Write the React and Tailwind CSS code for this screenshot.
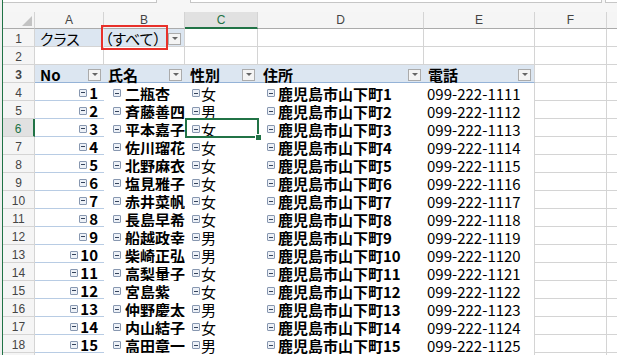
import React from "react";

const people = [
  ["二瓶杏", "女"],
  ["斉藤善四", "男"],
  ["平本嘉子", "女"],
  ["佐川瑠花", "女"],
  ["北野麻衣", "女"],
  ["塩見雅子", "女"],
  ["赤井菜帆", "女"],
  ["長島早希", "女"],
  ["船越政幸", "男"],
  ["柴崎正弘", "男"],
  ["高梨量子", "女"],
  ["宮島紫", "女"],
  ["仲野慶太", "男"],
  ["内山結子", "女"],
  ["高田章一", "男"],
];

const Minus = () => (
  <span className="inline-flex shrink-0 items-center justify-center w-[8px] h-[8px] border border-[#8797b0] rounded-[1px] bg-[#edf1f7]">
    <span className="w-[4px] h-px bg-[#34435c]" />
  </span>
);

const Drop = () => (
  <span className="ml-auto mr-[3px] flex shrink-0 items-center justify-center w-[13px] h-[12px] border border-[#ababab] bg-[#f4f4f4]">
    <svg width="6" height="3" viewBox="0 0 6 3">
      <path d="M0 0h6L3 3z" fill="#666" />
    </svg>
  </span>
);

function RowHead({ n, selected }) {
  return (
    <div
      className={
        selected
          ? "w-[32px] shrink-0 flex items-center justify-center bg-[#e1e1e1] text-[#217346] border-r-2 border-r-[#217346] border-b border-b-[#d4d4d4] font-['Liberation_Sans',sans-serif] text-[12px] pt-[2px]"
          : "w-[32px] shrink-0 flex items-center justify-center bg-[#f5f5f5] text-[#444] border-r border-b border-[#d4d4d4] font-['Liberation_Sans',sans-serif] text-[12px] pt-[2px]"
      }
    >
      {n}
    </div>
  );
}

const grid = "shrink-0 border-r border-b border-[#d4d4d4]";

function GridTail() {
  return (
    <>
      <div className={`w-[72px] ${grid}`} />
      <div className="flex-1 border-b border-[#d4d4d4]" />
    </>
  );
}

export default function App() {
  return (
    <div className="relative w-[617px] h-[355px] overflow-hidden bg-white flex font-['Noto_Sans_CJK_JP',sans-serif] text-black">
      <div className="w-[2px] shrink-0 bg-[#f0f0f0]" />
      <div className="w-px shrink-0 bg-[#217346]" />
      <div className="flex flex-col flex-1 min-w-0">
        {/* formula bar edge */}
        <div className="h-[12px] shrink-0 flex bg-[#f6f6f6]">
          <div className="w-[154px] h-[3px] bg-white border-b border-r border-[#c6c6c6]" />
          <div className="w-[33px]" />
          <div className="w-[412px] h-[3px] bg-white border-b border-x border-[#c6c6c6]" />
          <div className="w-[3px]" />
          <div className="flex-1 h-[3px] bg-white border-b border-l border-[#c6c6c6]" />
        </div>

        {/* column headers */}
        <div className="h-[17px] shrink-0 flex bg-[#f5f5f5] text-[12px] text-[#444] font-['Liberation_Sans',sans-serif]">
          <div className="w-[32px] shrink-0 relative border-r border-b border-r-[#d4d4d4] border-b-[#ababab]">
            <svg className="absolute right-[2px] bottom-[2px]" width="10" height="10" viewBox="0 0 10 10">
              <path d="M10 0V10H0z" fill="#c3c3c3" />
            </svg>
          </div>
          <div className="w-[69px] shrink-0 flex items-center justify-center border-r border-b border-r-[#d4d4d4] border-b-[#ababab]">A</div>
          <div className="w-[81px] shrink-0 flex items-center justify-center border-r border-b border-r-[#d4d4d4] border-b-[#ababab]">B</div>
          <div className="w-[73px] shrink-0 flex items-center justify-center bg-[#e1e1e1] text-[#217346] border-r border-r-[#d4d4d4] border-b-2 border-b-[#217346]">C</div>
          <div className="w-[166px] shrink-0 flex items-center justify-center border-r border-b border-r-[#d4d4d4] border-b-[#ababab]">D</div>
          <div className="w-[111px] shrink-0 flex items-center justify-center border-r border-b border-r-[#d4d4d4] border-b-[#ababab]">E</div>
          <div className="w-[72px] shrink-0 flex items-center justify-center border-r border-b border-r-[#d4d4d4] border-b-[#ababab]">F</div>
          <div className="flex-1 border-b border-b-[#ababab]" />
        </div>

        {/* row 1 */}
        <div className="h-[18px] shrink-0 flex text-[15px] leading-none">
          <RowHead n={1} />
          <div className="w-[69px] shrink-0 flex items-center pl-[5px] pt-[2px] bg-[#dce6f1] border-r border-b border-r-[#e8eef6] border-b-[#d4d4d4] [font-feature-settings:'palt']">クラス</div>
          <div className="w-[81px] shrink-0 flex items-center pl-[1px] pt-[2px] bg-[#dce6f1] border-r border-b border-[#d4d4d4] [font-feature-settings:'palt']">
            （すべて）
            <Drop />
          </div>
          <div className={`w-[73px] ${grid}`} />
          <div className={`w-[166px] ${grid}`} />
          <div className={`w-[111px] ${grid}`} />
          <GridTail />
        </div>

        {/* row 2 */}
        <div className="h-[18px] shrink-0 flex">
          <RowHead n={2} />
          <div className={`w-[69px] ${grid}`} />
          <div className={`w-[81px] ${grid}`} />
          <div className={`w-[73px] ${grid}`} />
          <div className={`w-[166px] ${grid}`} />
          <div className={`w-[111px] ${grid}`} />
          <GridTail />
        </div>

        {/* row 3: pivot header */}
        <div className="h-[18px] shrink-0 flex text-[15px] font-bold leading-none">
          <RowHead n={3} />
          <div className="w-[69px] shrink-0 flex items-center pl-[5px] pt-[2px] bg-[#dce6f1] border-b border-[#95b3d7]">
            No
            <Drop />
          </div>
          <div className="w-[81px] shrink-0 flex items-center pl-[4px] pt-[2px] bg-[#dce6f1] border-b border-[#95b3d7]">
            氏名
            <Drop />
          </div>
          <div className="w-[73px] shrink-0 flex items-center pl-[5px] pt-[2px] bg-[#dce6f1] border-b border-[#95b3d7]">
            性別
            <Drop />
          </div>
          <div className="w-[166px] shrink-0 flex items-center pl-[5px] pt-[2px] bg-[#dce6f1] border-b border-[#95b3d7]">
            住所
            <Drop />
          </div>
          <div className="w-[111px] shrink-0 flex items-center pl-[4px] pt-[2px] bg-[#dce6f1] border-b border-b-[#95b3d7] border-r border-r-[#d4d4d4]">
            電話
            <Drop />
          </div>
          <GridTail />
        </div>

        {/* data rows */}
        {people.map(([name, sex], i) => {
          const no = i + 1;
          const selected = i === 2;
          return (
            <div key={no} className="h-[18px] shrink-0 flex text-[15px] leading-none">
              <RowHead n={no + 3} selected={selected} />
              <div className="w-[69px] shrink-0 flex items-center justify-end gap-[2px] pr-[6px] pt-[2px] font-bold border-b border-[#b8cce4]">
                <Minus />
                {no}
              </div>
              <div className="w-[81px] shrink-0 flex items-center gap-[4px] pl-[9px] pt-[2px] font-bold overflow-hidden whitespace-nowrap">
                <Minus />
                {name}
              </div>
              <div className="w-[73px] shrink-0 relative flex items-center gap-[1px] pl-[7px] pt-[2px]">
                <Minus />
                {sex}
                {selected && (
                  <div className="absolute left-0 top-[-1px] right-[-1px] bottom-[-1px] border-2 border-[#217346]">
                    <div className="absolute right-[-5px] bottom-[-5px] w-[7px] h-[7px] bg-[#217346] border border-white" />
                  </div>
                )}
              </div>
              <div className="w-[166px] shrink-0 flex items-center gap-[3px] pl-[9px] pt-[2px] font-bold whitespace-nowrap">
                <Minus />
                鹿児島市山下町{no}
              </div>
              <div className="w-[111px] shrink-0 flex items-center pl-[3px] pt-[2px] border-r border-[#d4d4d4] whitespace-nowrap">
                099-222-{1110 + no}
              </div>
              <GridTail />
            </div>
          );
        })}

        {/* row 19 (cut off) */}
        <div className="h-[18px] shrink-0 flex">
          <RowHead n={19} />
          <div className="w-[69px] shrink-0" />
          <div className="w-[81px] shrink-0" />
          <div className="w-[73px] shrink-0" />
          <div className="w-[166px] shrink-0" />
          <div className="w-[111px] shrink-0 border-r border-[#d4d4d4]" />
          <GridTail />
        </div>
      </div>

      {/* red annotation box */}
      <div className="absolute left-[101px] top-[25px] w-[67px] h-[25px] border-2 border-[#e8302a]" />
    </div>
  );
}
